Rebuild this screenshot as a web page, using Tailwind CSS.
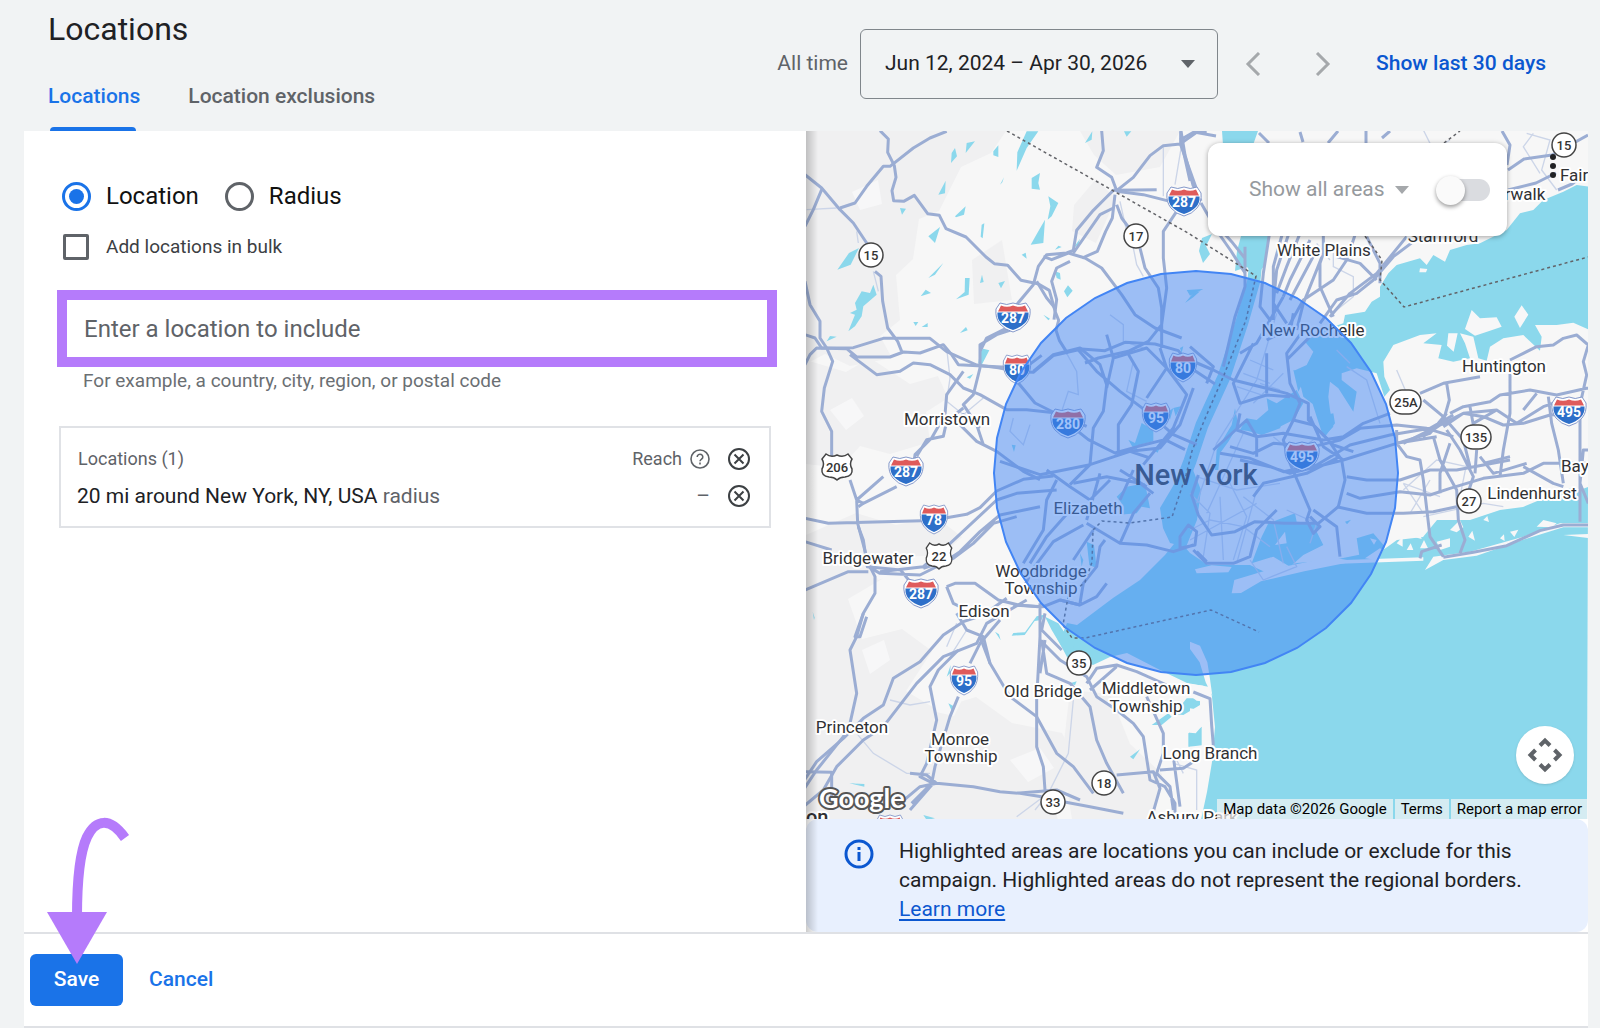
<!DOCTYPE html>
<html lang="en">
<head>
    <meta charset="UTF-8">
    <meta name="viewport" content="width=device-width, initial-scale=1.0">
    <title>Locations</title>
    <script src="https://cdn.jsdelivr.net/npm/@tailwindcss/browser@4"></script>
</head>
<body class="flex min-h-screen flex-col bg-[#f1f3f4] pr-3 pl-6 font-['Roboto',sans-serif] text-[#202124]">

    <header class="flex h-[131px] shrink-0 justify-between pl-6">
        <div class="flex flex-col justify-between">
            <h1 class="pt-2 text-[32px] leading-[42px]">Locations</h1>
            <nav class="flex gap-12 text-[21px] leading-7 font-medium">
                <a href="#" class="relative pb-[21px] text-[#1a73e8]">Locations
                    <span class="absolute right-1 bottom-0 left-0.5 h-1 rounded-t bg-[#1a73e8]"></span>
                </a>
                <a href="#" class="pb-[21px] text-[#5f6368]">Location exclusions</a>
            </nav>
        </div>
        <div class="flex items-center self-start pt-[29px] pr-[42px] text-[21px]">
            <span class="mr-3 text-[#5f6368]">All time</span>
            <button type="button" class="flex h-[70px] w-[358px] items-center justify-between rounded-md border border-[#80868b] pr-[21px] pl-6">
                <span>Jun 12, 2024 – Apr 30, 2026</span>
                <svg class="h-2 w-4" viewBox="0 0 16 8" fill="#5f6368"><path d="M1 0h14L8 8z"/></svg>
            </button>
            <button type="button" aria-label="Previous period" class="ml-[22px] p-1">
                <svg class="h-6 w-5" viewBox="0 0 20 24" fill="none" stroke="#a5a8ab" stroke-width="3"><path d="M15 1 4 12l11 11"/></svg>
            </button>
            <button type="button" aria-label="Next period" class="ml-10 p-1">
                <svg class="h-6 w-5" viewBox="0 0 20 24" fill="none" stroke="#a5a8ab" stroke-width="3"><path d="M5 1l11 11L5 23"/></svg>
            </button>
            <a href="#" class="ml-10 font-medium text-[#0b57d0]">Show last 30 days</a>
        </div>
    </header>

    <main class="grid flex-1 grid-cols-2">
        <section class="bg-white pt-[49px] pr-[29px] pl-[33px]">
            <div class="flex items-center gap-[26px] pl-[5px] text-[24px] leading-8 text-[#111]">
                <label class="flex items-center gap-[15px]">
                    <input type="radio" name="mode" checked class="size-[29px] appearance-none rounded-full border-[3px] border-[#1a73e8] bg-[#1a73e8] bg-clip-content p-1">
                    Location
                </label>
                <label class="flex items-center gap-[15px]">
                    <input type="radio" name="mode" class="size-[29px] appearance-none rounded-full border-[3px] border-[#5f6368]">
                    Radius
                </label>
            </div>
            <label class="mt-[21px] flex items-center gap-[17px] pl-1.5 text-[19px] leading-7 text-[#3c4043]">
                <input type="checkbox" class="size-[26px] appearance-none rounded-xs border-[3px] border-[#5f6368]">
                Add locations in bulk
            </label>

            <input type="text" aria-label="Enter a location to include" aria-describedby="hint" placeholder="Enter a location to include" class="mt-[29px] block h-[77px] w-full border-[10px] border-[#b57bfb] px-[17px] text-[24px] outline-none placeholder:text-[#5f6368]">
            <p id="hint" class="mt-0.5 pl-[26px] text-[19px] leading-6 text-[#6b6f73]">For example, a country, city, region, or postal code</p>

            <div class="mt-[33px] mr-1.5 ml-0.5 border-2 border-[#e0e2e6] pt-3 pb-3">
                <table class="w-full text-[#5f6368]">
                    <thead>
                        <tr class="h-[37px] text-[18px]">
                            <th scope="col" class="pl-[17px] text-left font-normal">Locations (1)</th>
                            <th scope="col" class="font-normal">
                                <span class="flex items-center justify-end gap-2">Reach
                                    <svg class="size-5" viewBox="0 0 20 20" fill="none" stroke="#5f6368" stroke-width="1.6"><circle cx="10" cy="10" r="9"/><path d="M7.2 7.9a2.8 2.6 0 1 1 4.4 2.1c-1 .7-1.6 1.1-1.6 2.3M10 13.6v1.9"/></svg>
                                </span>
                            </th>
                            <th scope="col" class="w-[59px]">
                                <button type="button" aria-label="Remove all" class="block px-[18px]">
                                    <svg class="size-[22px]" viewBox="0 0 22 22" fill="none" stroke="#3c4043" stroke-width="2"><circle cx="11" cy="11" r="10"/><path d="m6.500 6.500 9 9m0-9-9 9"/></svg>
                                </button>
                            </th>
                        </tr>
                    </thead>
                    <tbody>
                        <tr class="h-[37px] text-[21px] leading-7">
                            <td class="pl-4"><span class="text-[#202124]">20 mi around New York, NY, USA</span> radius</td>
                            <td class="text-right">–</td>
                            <td>
                                <button type="button" aria-label="Remove location" class="block px-[18px]">
                                    <svg class="size-[22px]" viewBox="0 0 22 22" fill="none" stroke="#3c4043" stroke-width="2"><circle cx="11" cy="11" r="10"/><path d="m6.500 6.500 9 9m0-9-9 9"/></svg>
                                </button>
                            </td>
                        </tr>
                    </tbody>
                </table>
            </div>
        </section>

        <section class="relative flex flex-col bg-white">
            <div class="relative min-h-[600px] flex-1 overflow-hidden bg-[#f7f7f7]">
                <svg class="absolute inset-0 size-full" viewBox="806 131 782 688" preserveAspectRatio="xMidYMid slice" font-family="Roboto, sans-serif">
                    <defs>
                        <g id="interstate">
                            <path d="M-13-14Q-6-11 0-14 6-11 13-14L17-8Q18 1 13 7 8 13 0 15-8 13-13 7-18 1-17-8Z" fill="#fff" stroke="#8498ca"/>
                            <path d="M-12-11.500Q-6-9 0-11.500 6-9 12-11.500L15-5.500H-15Z" fill="#df5b5b"/>
                            <path d="M-15.500-4.500H15.500Q16 2 12 6 7 11 0 13-7 11-12 6-16 2-15.500-4.500Z" fill="#2d6fc9"/>
                        </g>
                        <path id="us-route" d="M-11-13Q-6-9 0-12 6-9 11-13L15-8Q12-3 15 2 16 9 8 10 3 10 0 13-3 10-8 10-16 9-15 2-12-3-15-8Z" fill="#fff" stroke="#444" stroke-width="1.500"/>
                        <circle id="route" r="12" fill="#fff" stroke="#444" stroke-width="1.500"/>
                    </defs>

                    <!-- terrain -->
                    <g fill="#f0f0f1">
                        <path d="M806 131h200l-15 22-30 14-22 44-20 8-6 40-17 16 4 45-20 16 12 22-42 8-25-12-19 10z"/>
                        <path d="M806 360l40 12 24-14 40 26 28-8 10 22-22 14 4 30-40 12-30-8-20 22-34-4z"/>
                        <path d="M806 535l50-22 40 12 40-8 26 20-20 18-40 2-20 22-34 20 14 40 40-10 30 22-26 40 30 18 40-12 36 26 50 10 22 42-30 28 10 43H806z"/>
                        <path d="M1080 131h100l-20 36-44 8-22-20zM1074 205l22-26 20 20-20 44-24-12zM972 260l30-20 10 60-38 4z"/>
                        <path d="M1070 690l40 4 20 50 32 30-10 45h-80l-10-60z"/>
                    </g>
                    <g fill="#f7f7f8">
                        <path d="M830 410l22-12 12 18-18 14zM870 560l20-8 6 22-18 6zM862 650l22-10 6 20-20 14zM940 690l24 6-10 20-18-4zM852 192l26-12 4 24-22 6zM1010 760l30-12 14 20-26 14z"/>
                    </g>

                    <!-- sea, sound, rivers and lakes -->
                    <g fill="#8bd8ec">
                        <path d="M1588 493l-18-5-23 9-24 10-23 3-30 10h-33l-14 17-26 3-14 10-50 10-36 3-30 10-17-8-42 0-18-12-12-14-13 16-25 25-27 18-36 27-10-2-4 10-13-11 8 18 9 17 26 8 17-8 17-4 33 17 27 13 23 4 2 10 3 30-3 35-5 30-6 28h386z"/>
                        <path d="M1176 481l17-11 8 20-4 30-11 27-16-4-7-15-3-20z"/>
                        <path d="M1222 131h36l-5 14h-30zM1241 236l28-6-4 35-10 12-8-10-12 4 2-20z"/>
                        <path d="M1202 238l10-4-6 12 4 8-7 9-4-12z"/>
                        <path d="M1588 487l-22 8-20 16 22-3 20-6z"/>
                    </g>
                    <path d="M1259 230l-5 50-12 42-18 55-22 48-12 36-10 26" fill="none" stroke="#8bd8ec" stroke-width="13"/>
                    <g transform="translate(800 128) scale(.33333)" fill="#8bd8ec">
                        <path d="M680 10h35l-35 50-30 68 2-55zM500 45l25-5-28 35zM455 75l10-15 6 25-18 20zM580 70l15-18v35l-15-5zM415 200l22-42-2 38zM695 150l25-15-5 30 5 20-25-3zM745 205l30 20-20 40-12 10 8-40zM735 275l-5 70-38 5 20-35zM855 45l22-35-2 25zM972 10h22l-14 16zM465 265l32-30-5 25-24 8zM300 240l18 2-12 18zM385 325l35-28-15 48zM545 290l8-4-5 45-6-5zM600 170l12-22-5 15zM112 425l35-50 30-15-25 50zM385 450l45-45-25 35zM362 505l15-20 16 10zM495 450h14l-3 50-38 14 26-22zM540 465l6-25 5 22zM595 465l20-6-12 22zM145 610l20-50-15-5 20-10-5-20 20-35 25 5 10-25 10 30-40 35-5 30-20 30zM340 582h15l-8 12zM365 597l18-12v12zM480 615l18-18 5 10zM80 640l10-16 20 2zM540 670l10-8 18 5-25 48-8-10zM665 380l12-6 3 18zM765 430l15 5 2 20-12-5zM792 490l12-18 14 16-16 20zM730 560l20 12-5 5zM765 365l10-12 10 4zM500 748l20-10-10 14zM1155 525l25-30 20-5-20 18zM985 935l20 10 20-60 35 20v35l-40 10-15 20zM635 950l12 2-5 20zM1050 960l28 2-5 12zM1100 855l20-15-10 35zM820 360l20-28-5 18zM1120 840l22-5-15 30zM1140 660l10-5-5 20z"/>
                    </g>
                    <g transform="translate(800 470) scale(.33333)" fill="#8bd8ec">
                        <path d="M635 497l5-8 35-2 35-48 22-5-8 16-20 3-30 42zM735 440l40 20 20 30 30 30-10 30-30-20-30-50zM950 80l30-30 55-10 15 75-25-5-15 20-60 5 15-35zM860 215l22 10 8 70-22-10zM840 250l10 20-5 20zM585 485l12 8 5 18zM440 620l12-35-2 25zM445 700l15 8-5 14zM990 860l30-22-20 30zM1055 765l50-35 10 10-30 25zM1100 730l40-20 20-25h40v20l-50 30zM1165 790l40-20v60h-40zM150 940l45 5-30-4zM370 1035l35 10-25 5zM38 425l6 18-2 7zM975 370l20-5-15 25zM810 640l20-6-5 12zM148 940l45 2v8z"/>
                    </g>
                    <g transform="translate(1190 230) scale(.33333)" fill="#8bd8ec">
                        <path d="M1195-130L1160-135 1120-115 1060-90 1030-60 990-50 950 0 870 40 830 45 780 60 765 95 730 75 710 105 690 85 620 105 595 130 570 170 570 200 545 215 525 245 465 255 460 280 400 300 345 335 370 365 350 405 312 422 330 460 340 500 368 522 380 560 400 620 430 590 420 540 415 500 420 455 445 475 490 545 500 485 455 450 455 430 500 415 560 430 583 500 600 480 583 440 580 395 610 345 690 315 740 310 700 340 755 345 745 385 790 395 840 385 825 340 810 310 850 320 865 385 890 392 900 350 940 325 1000 315 1050 362 1055 320 1035 285 1100 285 1150 278 1195 298Z"/>
                        <path d="M75 720l5-60 45-75 10-50 10 50-30 50-25 35-5 50zM150 600l20-35 60 10 10-45 60-5-30 70-55 20-40-12zM200 570l35-30-5-35 30 15 60-40 20 40-30 50-60 30zM185 1000l30-80 20-40 80-30 5 25 70 5-10 25 20 40-60 30-40 35-50-30zM500 925l50-15 35 40-15 35-60 5zM310 420l15 5 10 40-10 20zM0 790l15 30-10 20-8-5zM465 875l18-6-12 14zM-10 180l50-3-40 20zM385 560l20 60 30-40-5-30z"/>
                    </g>

                    <!-- islands and sand bars -->
                    <g transform="translate(1190 230) scale(.33333)" fill="#f7f7f8">
                        <path d="M845 240l25 25 50-3 15 28-35 12-45 15-30-20zM995 226l20 28-25 40-17-34zM775 310h28l-12 55-20-18zM690 115l22 2-4 10h-20zM400 992l300-10v10l-270 10zM705 1020l25-40 110-15 160-45 110-40h90v12h-80l-130 40-130 45-100 13zM1040 890l20-20 40 10-15 12zM1120 915l75-3v12zM670 920l20-8 5 15zM780 900l30-30 10 22-20 15zM835 920l12-18 8 30zM880 870l12-12 5 18zM930 925l12-12 2 20zM960 905l25-6-12 22zM620 940l18-20v30zM650 960l12-20 8 20zM690 955l12-25 12 25zM740 935l40-10v25l-30 10z"/>
                        <path d="M125 1090l8-40 100-30 190-38 70 12-150 30-130 30-60 35zM15 1018l50-12 60 5-10 16-95 3zM525 985l45-30 10 5-20 30zM255 945l30-40 5 35zM540 925l20 5-8 14zM0 1235l30 12 22 50 8 50 7 50-20-40-18-60-29-40z"/>
                        <path d="M0 1362l40 5 25 30-5 20-40-5-20-15zM0 1435l60 10-8 25-35 40-17-2zM0 1550l40-5 22-20 2 60-15 60-20 90H0z"/>
                    </g>

                    <!-- local roads -->
                    <g fill="none" stroke="#ccd5e8" stroke-width="4">
                        <g transform="translate(800 128) scale(.33333)">
                            <path d="M20 245l90-5M170 310l5 35M220 430l15 60M1090 55v150M1145 50l-20 120M440 660l10 90-10 70 50 40 60-50M990 310l20 100 20 35M960 220l20 90M780 640l50 90 5 70-30-10-20 60M640 870l-10 40 40 40 20-60M930 560l40 30v50l60 20M1000 700l-20 90 60 30"/>
                        </g>
                        <g transform="translate(800 470) scale(.33333)">
                            <path d="M270 690l60 15 60-10M170 790l50 60 100 60h70M820 690l-15 160-60 120-40 50M500 480l-50 80M470 460l-30 70M1120 850l30 60M650 1040l80-60M1120 880l70 20v120"/>
                        </g>
                        <g transform="translate(1190 230) scale(.33333)">
                            <path d="M20 820l60-180 120-190 60-200M50 850l110-240M20 740l120 40 130-20M0 900l60-30 100 20 80 60M40 980l20-130-60-60M100 990l-10-190M0 930l200-110M130 990l40-130-60-120M160 800l90 70 30 130M200 780l-60 220M230 500l-90-30M240 460l-80-30M250 420l-70-30M280 430l-90 90M270 480l-60-20M250 620l60 50 60-40M620 420l30 70 30 50M470 410l60 40 40 130M480 400l-40-40M640 780l100-90 90 20M640 760l110 40M660 850l60-100M700 850l-60-90M830 700l-20 100M290 950l30 60-100 40-40-60M290 840l90 40-20 60M430 50v60l60 30v60l-50 40M380 40l40 50"/>
                            <path d="M700-300l30 60 50-30M1010-290l70 20-25 90 45 60M1050-170l-50-80 30-40M700 860l180-40 60 10"/>
                        </g>
                    </g>

                    <!-- highways -->
                    <g fill="none" stroke="#9badd3" stroke-width="9" stroke-linejoin="round">
                        <g transform="translate(800 128) scale(.33333)">
                            <path d="M240 8l25 25-2 40 20 40 5 35-12 40 5 30 30 2 32-18 40 55 35 5 20 40 60 25 60 60 25 20 40 5 40 45 50 10 35 20 18 65 10 25-8 30 10 30 25 40"/>
                            <path d="M440 10l-50 20-50 30-70 55h-20l-50 60-35 50-45 15"/>
                            <path d="M15 140l50 40 55 65 40 40 50 75M65 185l-25 60-25 50M225 430l18 15 5 75 15 80 30 40 12 30M15 460l15 70 30 50v50l20 30"/>
                            <path d="M15 620l30 10 20 30 95-1 90-28h140l50 40 90 40 65 8 60 12 45 2 60-50 85-20 70 5 60-25 90 5 70 20 50 60 60 40"/>
                            <path d="M15 710l15-30 20-20 90 2 30 25h100l40-15 50 3 70-25 25 30 20 30 130 7 80-5 40-30M150 680l80 60 70-10 40-25 50 5 60 30 40 40 50 20 80 45h60l90 10 90 40"/>
                            <path d="M80 660l18 40-25 80-8 70 30 60v90M650 600l-60 20-50 30v70l-20 80-30 30 40 60 20 60 40 20 80 60 50 25M620 600l-60 30-20 40M490 730l-50 70-5 60-40 70-50 50-5 40M490 840l-50 40-10 45-50 10-30 50M540 900l-50-40-20 20 60 60 60 30"/>
                            <path d="M650 530l50-60 15-55 25-35 60-5 20-8 10-60 50-60 40-40 20-20 130-2M710 460l30 50 25 30M730 385l25 10 50-20 50 15 50 30 60 80 40 60 60 40 80 30M810 400l-40 20-15 40 15 55-8 60"/>
                            <path d="M905 8l5 60-20 50 45 30 15 40 50-40 50-65 40-30 50-5 50-35h30M1142 10v40l50 140M950 190l80 10 80 20M945 200l-8 70-20 40-25 60-45 20M940 240l-40 20-80 115M950 230l15 40 30 40M1020 360l15 60 40 60 10 60v120M1130 250l-40 60v80l10 90-15 110-40 50-60 30-90 20-40 15"/>
                            <path d="M655 765l50 60 60 30 100 80 80 40 70-20 80-20 60 30M830 660l60 70 70 60 80 60 80 70 70 30M700 730l60-50 80-20 60 50 20 60-10 80-30 50-10 110-60 60M920 620l20 70-20 90M940 690l100-30 60 60-60 90M1080 660l20 60 60 80-40 100-90 110M980 670l35 60-20 100-40 60v80M1180 780l-40 110-60 70-90 10M600 1000l120 40 150-30 120-40 60 20"/>
                        </g>
                        <g transform="translate(800 470) scale(.33333)">
                            <path d="M15 145l70 15 280-8M440 143l60-10 40-20 50-50 80-35 90-10M15 215l80 25M250 20l-80 70 20 10 100-50M150 30l20 60 3 70 32 120 20 40v50l-35 60-20 70-20 40 20 130-20 90-20 40-80 100-40 60"/>
                            <path d="M175 110l15-10M175 170l15 40 12 80 100 10 40 50M15 360l130-55h60M205 290l35 20 120 5 60-30 60-40 60-60 60-50 120-25M240 305l130-15 70-60 150-140 60-20 120-10M370 295l90-30 60-45 60-60 70-20"/>
                            <path d="M440 350l25-10h60l70 50 60 15 60 5M440 350l20 50 40 20M470 430l30 50 50 20 20 80 60 100 80 60 60 110 50 40 60 80M620 385l-70 50-60 20-60 40-70 80-80 50-30 80-60 40-60 60-80 70-40 60M680 390l-120 70-30 60-100 40-80 80-100 130-60 40-80 80-40 70-60 50"/>
                            <path d="M600 450l-60 70-30 60M475 540l-60 60-25 50 20 100-30 130-20 40 40 20-70 80M475 680l-25 60-45 150-10 50-60 60M190 430l-25 70h15l20-60M330 910l50 5 30 25-50 10-60 50M410 940l110 10 80 15 60 5 65 10M790 995l80 15 100 20M840 990l-70-30-120 10M15 905l80 2v80"/>
                            <path d="M720 400v110l60 60 80 50 30 60 60 40 50 40 30 40 20 130 45 20 30 50v50M720 500l-10 190v140l20 60 5 70M725 510l15 100 70 30 60 70 20 100 30 70 50 90M735 510l-15 100M950 915l110-10 20 50-20 70M860 640l30-45 60-10 60 20 90 40M870 660l80-70M1040 680l50 110v60l-20 60 40 40 10 70M1080 900l70-5 30-20M1120 860l20 150M735 430l-10 50 60 60M640 405l90 5 50-20 60 15M540 500l30 80"/>
                            <path d="M860 160l100 60 80 5 80 20 60-20M850 165l-90 50-60 80-30 60M820 110l-80 90-50 80M880 180l-60 90M840 400l10-60 40-50 10-60 15-20M780 390l60 15 50-25 30-40M770 30l-30 60-10 90-60 100M820 40l100-20 100 20 40 30M900 10l-40 140M740 0l70 50 60 40 60-60M1000 0l-40 90M1140 200l25-35 25 20-5 40-45 10zM1190 245l30 30M1050 70l-50 60-40 90M960 0l80 50"/>
                        </g>
                        <g transform="translate(1190 230) scale(.33333)">
                            <path d="M165 50v120l-30 90-35 150M85-10l40 45 40 50M240 0l-20 130-10 100 30 40M280 0l-30 110v160M300 0l-40 120-10 100 40 60M330 10l-40 100-30 80M360 30l-60 120-20 50M400 10v60l-60 150-20 80M380 60l-80 150M500 0l-30 90-40 60-90 60-50 90-60 30M650 20l-90 110-80 60-60 70M690 20l-80 60-60 70-50 40-60 20-50 70M560 150l-50-50-70-20M410 40l-20 60v70l40 90M530 20l40 80v60"/>
                            <path d="M0 350l70 60-20 50M0 390l70 30 60 30 160 40 65 30v50l60 60 40 60 10 60-20 80-60 50h-100l-90-5-60 30-70 10-40-60-20-60 20-60M190 340l-30 60-30 60 20 60 80-25 70 5M230 370v120M340 300l-50 70 10 90 30 60-20 50-30 60 20 70 30 70 30 70-10 30 20 40 20-20-30-30M370 310l-80 80M310 250l-10 60M280 200l-80 140-50 30"/>
                            <path d="M70 660l100-90 30 50 80-10 120 20 60-10 60-40 80-30M90 670l90 15 100 40 100-20 100-60 120-30 120-20 70-40M120 650l70 20 60-30 120 10 80-20 60-35 110-10 90 10 80 25M150 690l90 20 60 20 160-40 160-50 100-30 50-60M150 550l-10 50 60 20v60M360 560l40 90 60 40M310 570l60 15 60 60 60 20M190 800l30-40 130-30 100-50M470 740l60 10h100l90-30h80l160-30M470 790l40 15 60-10 60-10 90 10 60-20 100-30 120-15 60-30h130M370 840l70 50 10 90M440 830l90 20h110l90-5 70-15M10 960l40 40h80l50-20 20-80 60-60"/>
                            <path d="M640 640l120-60 60-30 100-10 60 40 80-50 60-20h40M690 490l70-30 110-20M700 510l60 50 60 70 20 80M770 460l8 50-20 70-60 40M780 550l40-20 80-15 30-20 90-15 80 15 90-20h30M760 590l60-40 60 10 60 25 60-5 80-25 100-5M840 530l10 55M920 540l-70 40M1000 540l40-50M960 390l40-20 40-20 50-5 30-20 40-10 35 30-15 50 10 40-20 90v350M960 430v120l-20 110-10 80M1075 500l10 80 20 80 15 100M860 660l-5 70M870 680l40 50 100-30M770 600l40 60 40 80-20 60M780 640l-30 90v60M880 700l80-20M620 600v40l30 40 40 10 10 60 20 170 40 60M730 620l20 70 50 90 5 90 20 60-15 40M620 640l120-20M690 985l5-20 60-20M760 982l90-15 100-20 100-45 70-17h75M1000 710l90 50 30 10M1195 660h-15l-10 100 25 60"/>
                            <path d="M10 1386l50 20 5 80 5 60"/>
                        </g>
                        <path stroke-width="3" d="M1180 140l14-8 22 4M1182 145l8 36M1259 133l10 10M1300 132l3 10M1338 131l-10 12M1366 131v12M1382 138l8-7M1502 131l8 14-3 20M1508 170l16-11 28-4 36-20M1508 190l28-7 20-10M1558 190l14-6 10-8M1181 131l4 24 8 30 8 16M1201 203l16 28 14 20 14 22"/>
                    </g>

                    <!-- state and county borders -->
                    <g fill="none" stroke="#626368" stroke-width="1.500" stroke-dasharray="3 3">
                        <path d="M1007 131L1103 185 1188 233 1256 276 1246 320 1224 375 1204 421 1192 451 1186 475 1182 487 1172 517 1130 523 1102 521 1093 530 1092 562 1085 582 1068 597 1063 625 1072 638 1085 638 1211 610 1259 632M1365 236l17 24-2 20 24 27 184-50M1444 143l16-12"/>
                    </g>

                    <!-- route markers -->
                    <g text-anchor="middle" font-size="14" font-weight="700" fill="#fff">
                        <use href="#interstate" x="1184" y="201"/><text x="1184" y="207">287</text>
                        <use href="#interstate" x="1013" y="317"/><text x="1013" y="323">287</text>
                        <use href="#interstate" x="906" y="471"/><text x="906" y="477">287</text>
                        <use href="#interstate" x="921" y="593"/><text x="921" y="599">287</text>
                        <use href="#interstate" x="1068" y="423"/><text x="1068" y="429">280</text>
                        <use href="#interstate" x="1302" y="456"/><text x="1302" y="462">495</text>
                        <use href="#interstate" x="1569" y="411"/><text x="1569" y="417">495</text>
                        <use href="#interstate" transform="translate(1017 369) scale(.8 1)"/><text x="1017" y="375">80</text>
                        <use href="#interstate" transform="translate(1183 367) scale(.8 1)"/><text x="1183" y="373">80</text>
                        <use href="#interstate" transform="translate(1156 417) scale(.8 1)"/><text x="1156" y="423">95</text>
                        <use href="#interstate" transform="translate(934 519) scale(.8 1)"/><text x="934" y="525">78</text>
                        <use href="#interstate" transform="translate(964 680) scale(.8 1)"/><text x="964" y="686">95</text>
                        <use href="#interstate" transform="translate(890 829) scale(.8 1)"/>
                    </g>
                    <g text-anchor="middle" font-size="13" font-weight="500" fill="#333">
                        <use href="#us-route" x="837" y="467"/><text x="837" y="472">206</text>
                        <use href="#us-route" transform="translate(939 556) scale(.85 1)"/><text x="939" y="561">22</text>
                        <use href="#route" x="871" y="255"/><text x="871" y="260">15</text>
                        <use href="#route" x="1136" y="236"/><text x="1136" y="241">17</text>
                        <use href="#route" x="1079" y="663"/><text x="1079" y="668">35</text>
                        <use href="#route" x="1104" y="783"/><text x="1104" y="788">18</text>
                        <use href="#route" x="1053" y="802"/><text x="1053" y="807">33</text>
                        <use href="#route" x="1469" y="501"/><text x="1469" y="506">27</text>
                        <g fill="#fff" stroke="#444" stroke-width="1.500">
                            <rect x="1390" y="390" width="31" height="24" rx="12"/>
                            <rect x="1461" y="425" width="30" height="24" rx="12"/>
                        </g>
                        <text x="1406" y="407">25A</text>
                        <text x="1476" y="442">135</text>
                        <g fill="#202124">
                            <circle cx="1553" cy="157" r="3"/><circle cx="1553" cy="166" r="3"/><circle cx="1553" cy="175" r="3"/>
                        </g>
                        <use href="#route" x="1564" y="145"/><text x="1564" y="150">15</text>
                    </g>

                    <!-- towns -->
                    <g font-size="17" fill="#303134" stroke="#fff" stroke-width="4" stroke-linejoin="round" paint-order="stroke" text-anchor="middle">
                        <text x="947" y="425">Morristown</text>
                        <text x="868" y="564">Bridgewater</text>
                        <text x="984" y="617">Edison</text>
                        <text x="1041" y="577">Woodbridge</text>
                        <text x="1041" y="594">Township</text>
                        <text x="1088" y="514">Elizabeth</text>
                        <text x="1043" y="697">Old Bridge</text>
                        <text x="1146" y="694">Middletown</text>
                        <text x="1146" y="712">Township</text>
                        <text x="852" y="733">Princeton</text>
                        <text x="960" y="745">Monroe</text>
                        <text x="961" y="762">Township</text>
                        <text x="1210" y="759">Long Branch</text>
                        <text x="1192" y="823">Asbury Park</text>
                        <text x="806" y="824" font-size="20" font-weight="500" text-anchor="start">on</text>
                        <text x="1324" y="256">White Plains</text>
                        <text x="1443" y="242">Stamford</text>
                        <text x="1313" y="336">New Rochelle</text>
                        <text x="1504" y="372">Huntington</text>
                        <text x="1532" y="499">Lindenhurst</text>
                        <text x="1561" y="472" text-anchor="start">Bay</text>
                        <text x="1560" y="181" text-anchor="start">Fair</text>
                        <text x="1514" y="200">Norwalk</text>
                    </g>
                    <text x="1196" y="485" font-size="29" font-weight="500" fill="#303134" text-anchor="middle">New York</text>

                    <!-- 20 mi radius -->
                    <polygon transform="translate(1196 473)" fill="#4285f4" fill-opacity=".5" stroke="#4285f4" stroke-width="2" points="202,0 199,35 190,69 175,101 155,130 130,155 101,175 69,190 35,199 0,202 -35,199 -69,190 -101,175 -130,155 -155,130 -175,101 -190,69 -199,35 -202,0 -199,-35 -190,-69 -175,-101 -155,-130 -130,-155 -101,-175 -69,-190 -35,-199 0,-202 35,-199 69,-190 101,-175 130,-155 155,-130 175,-101 190,-69 199,-35"/>

                    <text x="819" y="808" font-family="Lato, sans-serif" font-size="27" font-weight="700" fill="#fff" stroke="#555" stroke-width="4" stroke-linejoin="round" paint-order="stroke">Google</text>
                </svg>

                <div class="absolute top-3 right-[81px] flex h-[93px] w-[299px] items-center rounded-xl bg-white pl-[41px] shadow-[0_1px_5px_rgb(0_0_0/0.35)]">
                    <button type="button" disabled class="flex items-center gap-[9px] text-[21px] text-[#969a9e]">Show all areas
                        <svg class="h-2 w-4" viewBox="0 0 16 8" fill="#a5a8ab"><path d="M1 0h14L8 8z"/></svg>
                    </button>
                    <label class="relative ml-[26px] flex h-6 w-[54px] items-center">
                        <input type="checkbox" role="switch" aria-label="Show all areas on map" class="peer ml-1 h-[22px] w-[50px] appearance-none rounded-full bg-[#dadce0]">
                        <span class="absolute -top-0.5 left-0 size-[29px] rounded-full bg-[#fafafa] shadow-[0_2px_4px_rgb(0_0_0/0.4)] peer-checked:left-6"></span>
                    </label>
                </div>

                <button type="button" aria-label="Map camera controls" class="absolute right-3.5 bottom-[35px] grid size-[58px] place-items-center rounded-full bg-white shadow">
                    <svg class="size-9" viewBox="0 0 36 36" fill="none" stroke="#5f6368" stroke-width="4"><path d="m13 8.500 5-5 5 5M13 27.500l5 5 5-5M8.500 13l-5 5 5 5M27.500 13l5 5-5 5"/></svg>
                </button>

                <div class="absolute right-0 bottom-0 flex gap-0.5 text-[15px] leading-5 text-black">
                    <span class="bg-[#f5f5f5]/70 px-1.5">Map data ©2026 Google</span>
                    <a href="#" class="bg-[#f5f5f5]/70 px-1.5">Terms</a>
                    <a href="#" class="bg-[#f5f5f5]/70 px-1.5">Report a map error</a>
                </div>
            </div>

            <div class="flex h-[113px] gap-[25px] rounded-xl bg-[#e8f0fe] pt-[18px] pr-12 pl-[38px]">
                <svg class="mt-0.5 size-[30px] shrink-0" viewBox="0 0 30 30" fill="none" stroke="#0b57d0" stroke-width="3"><circle cx="15" cy="15" r="13"/><path d="M15 13v9M15 8v3"/></svg>
                <p class="text-[21px] leading-[29px]">Highlighted areas are locations you can include or exclude for this campaign. Highlighted areas do not represent the regional borders. <a href="#" class="block text-[#0b57d0] underline underline-offset-3">Learn more</a></p>
            </div>
            <div class="pointer-events-none absolute inset-y-0 left-0 w-3 bg-linear-to-r from-black/20 to-transparent"></div>
        </section>
    </main>

    <footer class="relative flex h-[96px] shrink-0 items-center gap-[26px] border-y-2 border-[#dfe1e5] bg-white pl-1.5 text-[21px] font-medium">
        <button type="button" class="h-[52px] w-[93px] rounded-md bg-[#1a73e8] text-white">Save</button>
        <button type="button" class="text-[#1a73e8]">Cancel</button>
        <svg class="pointer-events-none absolute bottom-[61px] left-5 h-[150px] w-[90px]" viewBox="0 0 90 150" fill="none">
            <path d="M81 23C66 2 52 4 43 22 35 39 33 70 33 102" stroke="#b57bfb" stroke-width="10"/>
            <path d="M3 97h60L33 149z" fill="#b57bfb"/>
        </svg>
    </footer>
</body>
</html>
